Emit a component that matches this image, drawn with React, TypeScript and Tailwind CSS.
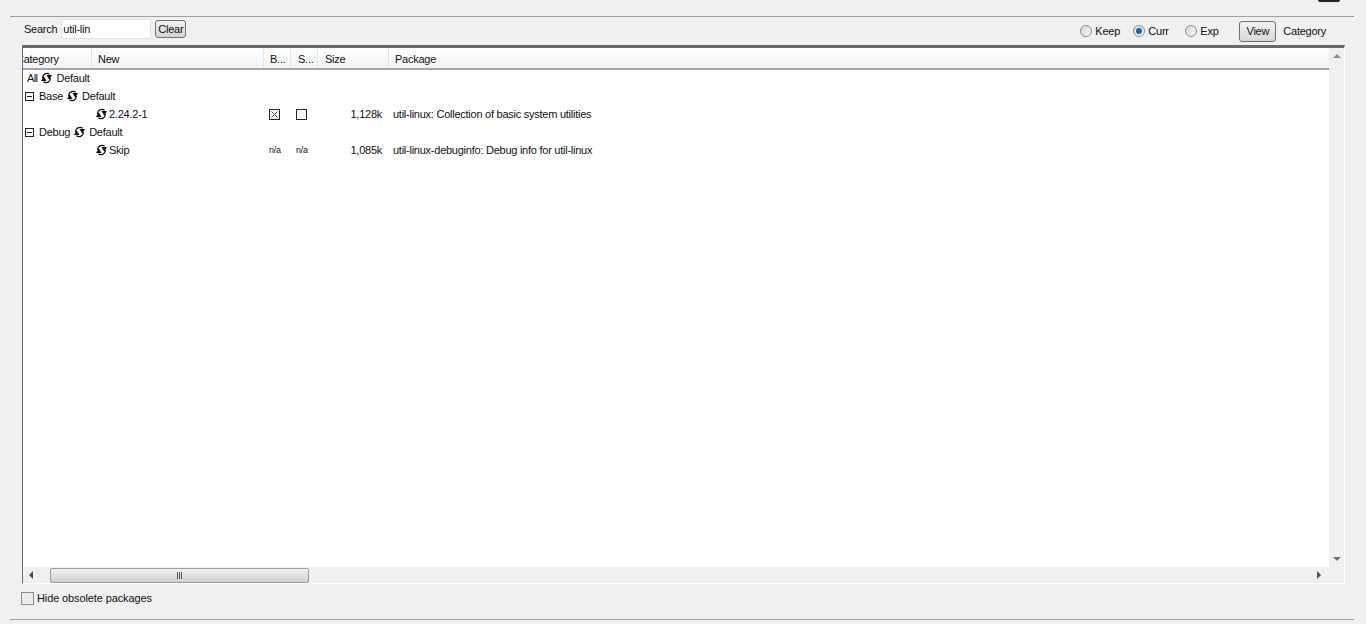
import React from "react";

const COLS = "grid grid-cols-[69px_172px_27px_27px_71px_1fr]";

function CycleIcon() {
  return (
    <svg width="11" height="12" viewBox="0 0 11 12" className="shrink-0">
      <path d="M1.6 6A4.4 4.4 0 0 1 8.6 2.2" fill="none" stroke="#111" strokeWidth="1.2" />
      <path d="M9.4 6A4.4 4.4 0 0 1 2.4 9.8" fill="none" stroke="#111" strokeWidth="1.2" />
      <path d="M2.7 4.2L5.6 9H0z" fill="#111" />
      <path d="M8.3 7.8L5.4 3H11z" fill="#111" />
    </svg>
  );
}

function Expander() {
  return (
    <span className="flex h-[9px] w-[9px] shrink-0 items-center justify-center border border-[#222]">
      <span className="h-px w-[5px] bg-[#222]" />
    </span>
  );
}

function HeaderCell({ label, className = "" }: { label: string; className?: string }) {
  return (
    <div className={`flex items-center overflow-hidden border-r border-[#e3e5e8] pt-[2px] ${className}`}>
      {label}
    </div>
  );
}

function CategoryRow({ name, expander }: { name: string; expander?: boolean }) {
  return (
    <div className={`flex h-[18px] items-center ${expander ? "pl-[2px]" : "pl-[4px]"}`}>
      {expander && <Expander />}
      <span className={expander ? "ml-[5px]" : "tracking-[-0.6px]"}>{name}</span>
      <span className="mx-[4px]">
        <CycleIcon />
      </span>
      <span>Default</span>
    </div>
  );
}

function PackageRow({
  version,
  binary,
  source,
  size,
  text,
}: {
  version: string;
  binary: React.ReactNode;
  source: React.ReactNode;
  size: string;
  text: string;
}) {
  return (
    <div className={`${COLS} h-[18px] items-center`}>
      <div />
      <div className="flex items-center gap-[2px] pl-[4px]">
        <CycleIcon />
        <span>{version}</span>
      </div>
      <div className="flex pl-[5px]">{binary}</div>
      <div className="flex pl-[5px]">{source}</div>
      <div className="pr-[7px] text-right">{size}</div>
      <div className="whitespace-nowrap pl-[4px]">{text}</div>
    </div>
  );
}

function NotAvailable() {
  return <span className="pt-px text-[9px] tracking-[-0.3px]">n/a</span>;
}

function Radio({ label, checked, width }: { label: string; checked?: boolean; width: string }) {
  return (
    <div className={`flex items-center gap-[3px] pl-px ${width}`}>
      <span className="flex h-[12px] w-[12px] items-center justify-center rounded-full border border-[#8e8f8f] bg-gradient-to-br from-[#d8d8d8] to-[#f4f4f4]">
        {checked && <span className="h-[6px] w-[6px] rounded-full bg-[#0f6a9e]" />}
      </span>
      <span>{label}</span>
    </div>
  );
}

export default function App() {
  return (
    <div className="h-[624px] w-[1366px] overflow-hidden bg-[#f0f0f0] font-['Liberation_Sans',sans-serif] text-[11px] tracking-[-0.25px] text-[#111]">
      <div className="flex h-[16px] justify-end pr-[26px]">
        <div className="h-[2px] w-[22px] rounded-b-[2px] bg-[#222]" />
      </div>
      <div className="mx-[10px] h-px w-[1344px] bg-[#a0a0a0]" />

      <div className="flex h-[28px] items-center pl-[24px] pr-[40px]">
        <div className="mb-[4px] flex items-center">
          <span>Search</span>
          <input
            readOnly
            value="util-lin"
            className="ml-[4px] h-[20px] w-[90px] rounded-[2px] border border-[#e3e3e3] bg-white pl-px outline-none"
          />
          <button className="ml-[4px] h-[18px] w-[31px] rounded-[3px] border border-[#707070] bg-gradient-to-b from-[#f2f2f2] to-[#d4d4d4]">
            Clear
          </button>
        </div>
        <div className="ml-auto flex items-center">
          <Radio label="Keep" width="w-[53px]" />
          <Radio label="Curr" checked width="w-[52px]" />
          <Radio label="Exp" width="w-[55px]" />
          <button className="h-[21px] w-[37px] rounded-[3px] border border-[#707070] bg-gradient-to-b from-[#f2f2f2] to-[#d8d8d8]">
            View
          </button>
          <span className="ml-[7px]">Category</span>
        </div>
      </div>

      <div className="ml-[22px] flex h-[539px] w-[1323px] flex-col border-b border-l border-r border-t-[3px] border-b-white border-l-[#696969] border-r-white border-t-[#696969]">
        <div className="flex min-h-0 flex-1">
          <div className="flex min-w-0 flex-1 flex-col bg-white">
            <div className={`${COLS} h-[22px] shrink-0 border-b-2 border-[#a5a5a5] bg-gradient-to-b from-white to-[#f2f3f5]`}>
              <HeaderCell label="Category" className="[text-indent:-7px]" />
              <HeaderCell label="New" className="pl-[6px]" />
              <HeaderCell label="B..." className="pl-[6px]" />
              <HeaderCell label="S..." className="pl-[7px]" />
              <HeaderCell label="Size" className="pl-[7px]" />
              <div className="flex items-center pl-[6px] pt-[2px]">Package</div>
            </div>
            <div className="-mt-px">
              <CategoryRow name="All" />
              <CategoryRow name="Base" expander />
              <PackageRow
                version="2.24.2-1"
                binary={
                  <svg width="11" height="11" viewBox="0 0 11 11">
                    <rect x="0.5" y="0.5" width="10" height="10" fill="none" stroke="#222" />
                    <path d="M2.5 2.5l6 6M8.5 2.5l-6 6" stroke="#444" />
                  </svg>
                }
                source={<span className="h-[11px] w-[11px] border border-[#222]" />}
                size="1,128k"
                text="util-linux: Collection of basic system utilities"
              />
              <CategoryRow name="Debug" expander />
              <PackageRow
                version="Skip"
                binary={<NotAvailable />}
                source={<NotAvailable />}
                size="1,085k"
                text="util-linux-debuginfo: Debug info for util-linux"
              />
            </div>
          </div>
          <div className="flex w-[15px] flex-col items-center justify-between bg-[#f0f0f0] py-[6px]">
            <span className="h-0 w-0 border-x-[4px] border-b-[4px] border-x-transparent border-b-[#909090]" />
            <span className="h-0 w-0 border-x-[4px] border-t-[4px] border-x-transparent border-t-[#707070]" />
          </div>
        </div>
        <div className="flex h-[16px] shrink-0 items-center bg-[#f0f0f0] pr-[15px]">
          <span className="ml-[6px] h-0 w-0 border-y-[4px] border-r-[4px] border-y-transparent border-r-[#505050]" />
          <div className="ml-[17px] flex h-[15px] w-[259px] items-center justify-center rounded-[2px] border border-[#9a9a9a] bg-gradient-to-b from-[#f3f3f3] to-[#cfcfcf]">
            <span className="flex gap-px">
              <span className="h-[7px] w-px bg-[#555]" />
              <span className="h-[7px] w-px bg-[#555]" />
              <span className="h-[7px] w-px bg-[#555]" />
            </span>
          </div>
          <span className="ml-auto mr-[8px] h-0 w-0 border-y-[4px] border-l-[4px] border-y-transparent border-l-[#505050]" />
        </div>
      </div>

      <div className="flex h-[28px] items-center pl-[21px]">
        <span className="h-[13px] w-[13px] border border-[#8e8f8f] bg-[#ececec]" />
        <span className="ml-[3px] tracking-[-0.12px]">Hide obsolete packages</span>
      </div>
      <div className="mx-[10px] mt-[7px] h-px w-[1344px] bg-[#a0a0a0]" />
    </div>
  );
}
